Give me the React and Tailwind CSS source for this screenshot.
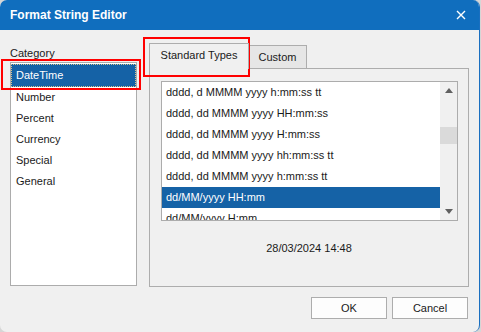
export default function App() {
  const cats = ["DateTime", "Number", "Percent", "Currency", "Special", "General"];
  const fmts = [
    "dddd, d MMMM yyyy h:mm:ss tt",
    "dddd, dd MMMM yyyy HH:mm:ss",
    "dddd, dd MMMM yyyy H:mm:ss",
    "dddd, dd MMMM yyyy hh:mm:ss tt",
    "dddd, dd MMMM yyyy h:mm:ss tt",
    "dd/MM/yyyy HH:mm",
    "dd/MM/yyyy H:mm",
  ];
  return (
    <div className="w-[481px] h-[332px] bg-[#d6d6d6] overflow-hidden font-['Liberation_Sans',Arial,sans-serif] text-[11px] text-[#1a1a1a]">
      <div className="relative w-[480px] h-[332px] rounded-[7px] overflow-hidden bg-[#f0f0f0] border-r border-[#1a6fc0] flex flex-col">
        {/* Title bar */}
        <div className="h-[30px] shrink-0 bg-[#106ebe] flex items-center justify-between pl-[10px] pr-[13px]">
          <span className="text-white font-bold text-[12px] leading-none">Format String Editor</span>
          <svg width="10" height="10" viewBox="0 0 10 10" className="block">
            <path d="M1 1 L9 9 M9 1 L1 9" stroke="white" strokeWidth="1.4" fill="none" />
          </svg>
        </div>

        {/* Content */}
        <div className="flex pl-[10px] pt-[13px]">
          {/* Left column */}
          <div className="w-[127px] flex flex-col">
            <div className="h-[19px] leading-[19px] pt-[1px]">Category</div>
            <div className="h-[224px] border border-[#acacac] bg-white pt-[1px] flex flex-col">
              {cats.map((c, i) =>
                i === 0 ? (
                  <div key={c} className="h-[23px] bg-[#1562a6] text-white flex">
                    <div className="flex-1 border border-dotted border-[#d8c38e] flex items-center pl-[4px]">{c}</div>
                  </div>
                ) : (
                  <div key={c} className="h-[21px] flex items-center pl-[5px]">{c}</div>
                )
              )}
            </div>
          </div>

          {/* Right column: tab control */}
          <div className="ml-[12px] w-[320px] flex flex-col">
            <div className="h-[26px] flex items-start">
              <div className="relative z-10 w-[100px] h-[26px] border-l border-t border-r border-[#adadad] bg-[#f0f0f0] flex items-center justify-center pb-[2px]">
                Standard Types
              </div>
              <div className="mt-[2px] w-[58px] h-[23px] border-t border-r border-[#adadad] bg-[#e6e6e6] flex items-center justify-center">
                Custom
              </div>
            </div>
            <div className="-mt-[1px] h-[219px] border border-[#adadad] bg-[#f0f0f0] flex flex-col">
              <div className="pl-[11px] pt-[12px]">
                <div className="w-[297px] h-[140px] border border-[#acacac] bg-white flex">
                  <div className="flex-1 overflow-hidden flex flex-col">
                    {fmts.map((f, i) => (
                      <div
                        key={f}
                        className={
                          i === 5
                            ? "h-[21px] shrink-0 flex items-center pl-[4px] bg-[#1562a6] text-white"
                            : "h-[21px] shrink-0 flex items-center pl-[4px]"
                        }
                      >
                        {f}
                      </div>
                    ))}
                  </div>
                  <div className="w-[17px] bg-[#f0f0f0] flex flex-col">
                    <div className="h-[17px] flex items-center justify-center">
                      <svg width="8" height="5" viewBox="0 0 8 5"><path d="M4 0 L8 5 L0 5 Z" fill="#606060" /></svg>
                    </div>
                    <div className="h-[28px]" />
                    <div className="h-[17px] bg-[#dadada]" />
                    <div className="flex-1" />
                    <div className="h-[17px] flex items-center justify-center">
                      <svg width="8" height="5" viewBox="0 0 8 5"><path d="M0 0 L8 0 L4 5 Z" fill="#606060" /></svg>
                    </div>
                  </div>
                </div>
              </div>
              <div className="mt-[19px] h-[16px] leading-[16px] text-center">28/03/2024 14:48</div>
            </div>
          </div>
        </div>

        {/* Buttons */}
        <div className="flex justify-end gap-[5px] pr-[11px] mt-[10px]">
          <div className="w-[76px] h-[22px] border border-[#adadad] bg-[#fdfdfd] flex items-center justify-center">OK</div>
          <div className="w-[76px] h-[22px] border border-[#adadad] bg-[#fdfdfd] flex items-center justify-center">Cancel</div>
        </div>

        {/* Red annotation boxes */}
        <div className="absolute left-[1px] top-[59px] w-[140px] h-[31px] border-[2px] border-[#ff0000] pointer-events-none" />
        <div className="absolute left-[143px] top-[37px] w-[107px] h-[40px] border-[2px] border-[#ff0000] pointer-events-none" />
      </div>
    </div>
  );
}
